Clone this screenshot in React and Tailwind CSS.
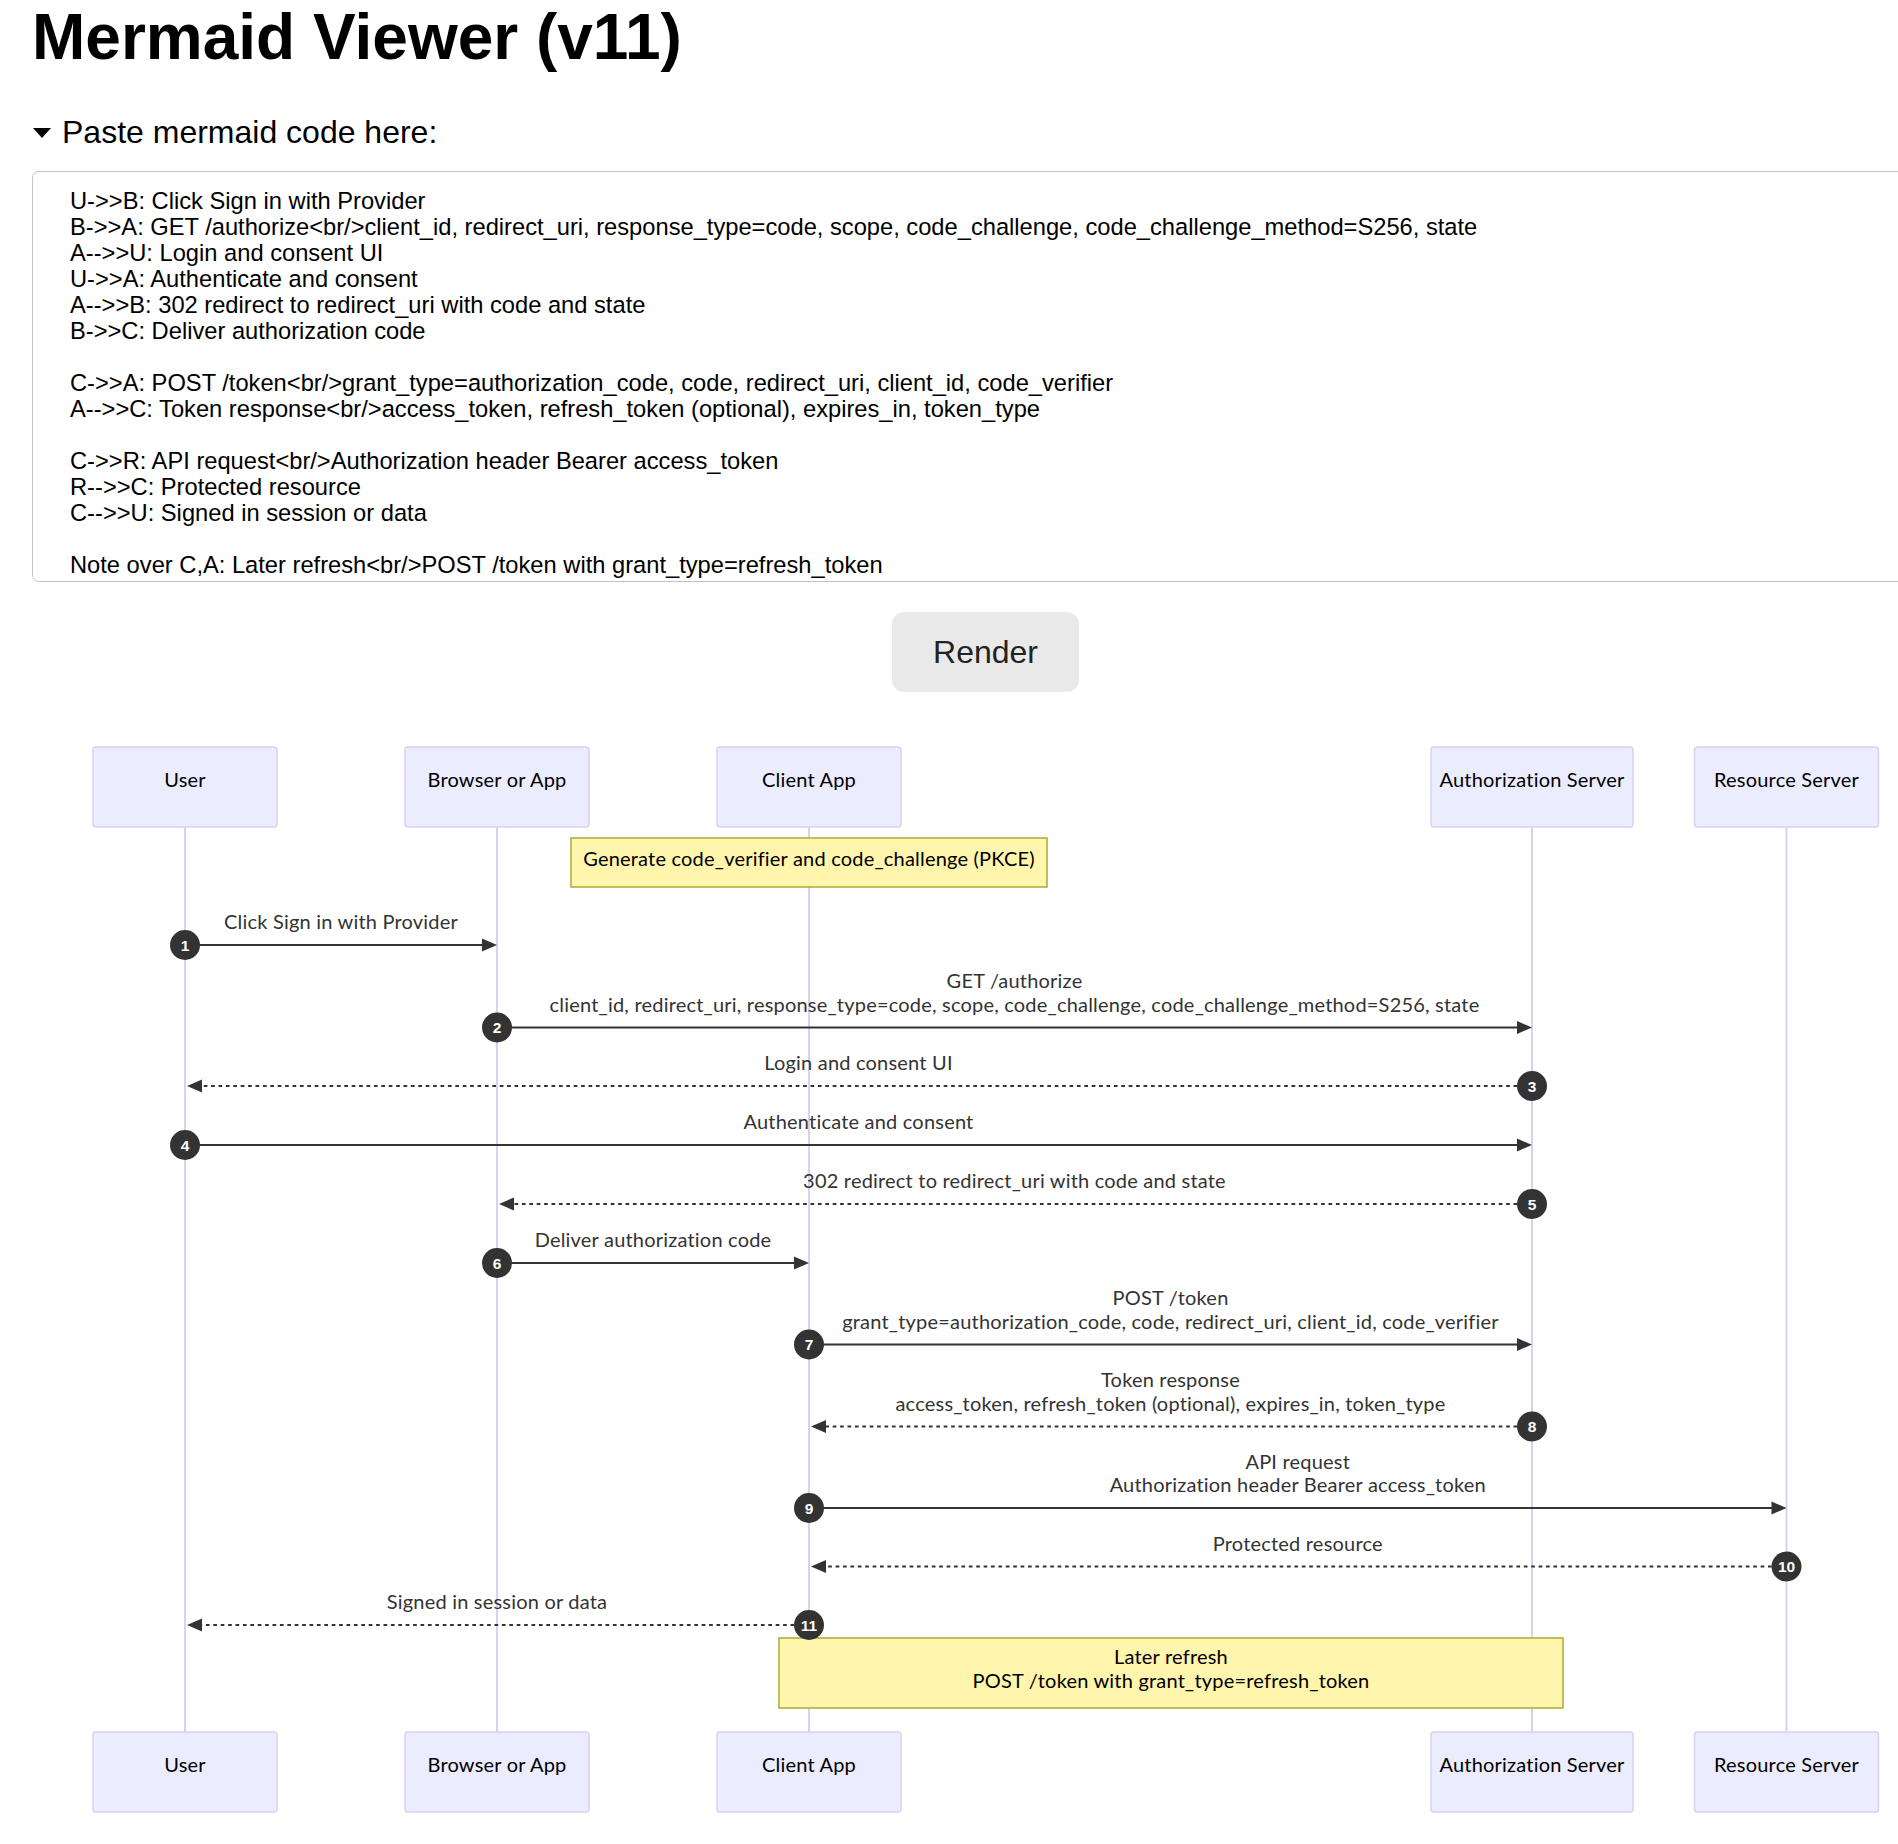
import React from 'react';

const LANE = { U: 185, B: 497, C: 809, A: 1532, R: 1786.5 };

const ACTORS = [
    { key: 'U', name: 'User', w: 184 },
    { key: 'B', name: 'Browser or App', w: 184 },
    { key: 'C', name: 'Client App', w: 184 },
    { key: 'A', name: 'Authorization Server', w: 202 },
    { key: 'R', name: 'Resource Server', w: 184 },
];

const MESSAGES = [
    { from: 'U', to: 'B', y: 944, lines: ['Click Sign in with Provider'] },
    {
        from: 'B',
        to: 'A',
        y: 1026.5,
        lines: [
            'GET /authorize',
            'client_id, redirect_uri, response_type=code, scope, code_challenge, code_challenge_method=S256, state',
        ],
    },
    { from: 'A', to: 'U', y: 1085, dashed: true, lines: ['Login and consent UI'] },
    { from: 'U', to: 'A', y: 1144, lines: ['Authenticate and consent'] },
    { from: 'A', to: 'B', y: 1203, dashed: true, lines: ['302 redirect to redirect_uri with code and state'] },
    { from: 'B', to: 'C', y: 1262, lines: ['Deliver authorization code'] },
    {
        from: 'C',
        to: 'A',
        y: 1343.5,
        lines: ['POST /token', 'grant_type=authorization_code, code, redirect_uri, client_id, code_verifier'],
    },
    {
        from: 'A',
        to: 'C',
        y: 1425.5,
        dashed: true,
        lines: ['Token response', 'access_token, refresh_token (optional), expires_in, token_type'],
    },
    {
        from: 'C',
        to: 'R',
        y: 1507,
        lines: ['API request', 'Authorization header Bearer access_token'],
    },
    { from: 'R', to: 'C', y: 1565.5, dashed: true, lines: ['Protected resource'] },
    { from: 'C', to: 'U', y: 1624, dashed: true, lines: ['Signed in session or data'] },
];

const NOTES = [
    { x: 571, y: 837, w: 476, h: 49, lines: ['Generate code_verifier and code_challenge (PKCE)'] },
    { x: 779, y: 1637, w: 784, h: 70, lines: ['Later refresh', 'POST /token with grant_type=refresh_token'] },
];

const CODE = [
    'U->>B: Click Sign in with Provider',
    'B->>A: GET /authorize<br/>client_id, redirect_uri, response_type=code, scope, code_challenge, code_challenge_method=S256, state',
    'A-->>U: Login and consent UI',
    'U->>A: Authenticate and consent',
    'A-->>B: 302 redirect to redirect_uri with code and state',
    'B->>C: Deliver authorization code',
    '',
    'C->>A: POST /token<br/>grant_type=authorization_code, code, redirect_uri, client_id, code_verifier',
    'A-->>C: Token response<br/>access_token, refresh_token (optional), expires_in, token_type',
    '',
    'C->>R: API request<br/>Authorization header Bearer access_token',
    'R-->>C: Protected resource',
    'C-->>U: Signed in session or data',
    '',
    'Note over C,A: Later refresh<br/>POST /token with grant_type=refresh_token',
];

const FONT = "Lato, 'Open Sans', sans-serif";
const LIFE = '#dad0f4';

// shared props for diagram text
const label = { fontSize: 20, letterSpacing: 0.2, fontFamily: FONT, textAnchor: 'middle' };

function Actor({ a, top }) {
    const cx = LANE[a.key];
    return (
        <g>
            <rect
                x={cx - a.w / 2}
                y={top}
                width={a.w}
                height={80}
                rx="3"
                fill="#ECECFF"
                stroke={LIFE}
                strokeWidth="1.5"
            />
            <text x={cx} y={top + 40} fill="#000" {...label}>
                {a.name}
            </text>
        </g>
    );
}

function Message({ m }) {
    const x1 = LANE[m.from];
    const x2 = LANE[m.to];
    const dir = x2 > x1 ? 1 : -1;
    const tip = dir > 0 ? x2 : x2 + 2;
    const mid = (x1 + x2) / 2;
    const last = m.y - 22;
    return (
        <g>
            {m.lines.map((t, i) => (
                <text key={i} x={mid} y={last - (m.lines.length - 1 - i) * 23.5 + 6} fill="#333" {...label}>
                    {t}
                </text>
            ))}
            <line
                x1={x1}
                y1={m.y}
                x2={tip - dir * 12}
                y2={m.y}
                stroke="#333"
                strokeWidth="2"
                strokeDasharray={m.dashed ? '3.7 3.7' : undefined}
            />
            <polygon
                points={`${tip},${m.y} ${tip - dir * 15},${m.y - 6.5} ${tip - dir * 15},${m.y + 6.5}`}
                fill="#333"
            />
        </g>
    );
}

function Note({ n }) {
    const cx = n.x + n.w / 2;
    const first = n.lines.length === 1 ? n.y + n.h / 2 - 3.5 : n.y + 19;
    return (
        <g>
            <rect x={n.x} y={n.y} width={n.w} height={n.h} fill="#fff5ad" stroke="#aaaa33" strokeWidth="1.5" />
            {n.lines.map((t, i) => (
                <text key={i} x={cx} y={first + i * 23.5 + 7} fill="#000" {...label}>
                    {t}
                </text>
            ))}
        </g>
    );
}

function SequenceDiagram() {
    return (
        <svg
            className="block mt-[25px]"
            width="1907"
            height="1128"
            viewBox="32 716 1907 1128"
            xmlns="http://www.w3.org/2000/svg"
        >
            {ACTORS.map((a) => (
                <line
                    key={a.key}
                    x1={LANE[a.key]}
                    y1={826}
                    x2={LANE[a.key]}
                    y2={1731}
                    stroke={LIFE}
                    strokeWidth="2"
                />
            ))}
            {ACTORS.map((a) => (
                <Actor key={'t' + a.key} a={a} top={746} />
            ))}
            {ACTORS.map((a) => (
                <Actor key={'b' + a.key} a={a} top={1731} />
            ))}
            {MESSAGES.map((m, i) => (
                <Message key={i} m={m} />
            ))}
            {NOTES.map((n, i) => (
                <Note key={i} n={n} />
            ))}
            {MESSAGES.map((m, i) => (
                <g key={'n' + i}>
                    <circle cx={LANE[m.from]} cy={m.y} r="15" fill="#333" />
                    <text
                        x={LANE[m.from]}
                        y={m.y + 5.5}
                        textAnchor="middle"
                        fontSize="15.5"
                        fontWeight="700"
                        fill="#fff"
                        fontFamily="'Liberation Sans', Arial, sans-serif"
                    >
                        {i + 1}
                    </text>
                </g>
            ))}
        </svg>
    );
}

export default function App() {
    return (
        <div className="h-[1844px] overflow-hidden bg-white text-black font-['Liberation_Sans',Arial,sans-serif]">
            <div className="w-[1907px] ml-[32px]">
                <h1 className="m-0 text-[64px] font-bold leading-[74px]">Mermaid Viewer (v11)</h1>
                <details open className="mt-[40px]">
                    <summary className="flex items-center list-none text-[32px] leading-[37px] cursor-pointer">
                        <svg width="18" height="10" viewBox="0 0 18 10" className="ml-px mr-[11px]">
                            <polygon points="0,0 18,0 9,10" fill="#000" />
                        </svg>
                        Paste mermaid code here:
                    </summary>
                    <div className="mt-[20px] h-[411px] overflow-hidden rounded-[7px] border border-[#c4c4c4] pt-[16px] pl-[37px] text-[23.7px] leading-[26px] whitespace-pre">
                        {CODE.map((line, i) => (
                            <div key={i} className="h-[26px]">
                                {line}
                            </div>
                        ))}
                    </div>
                </details>
                <button className="mx-auto mt-[30px] block h-[80px] w-[187px] rounded-[12px] bg-[#e9e9e9] text-[32px] text-[#222]">
                    Render
                </button>
                <SequenceDiagram />
            </div>
        </div>
    );
}
